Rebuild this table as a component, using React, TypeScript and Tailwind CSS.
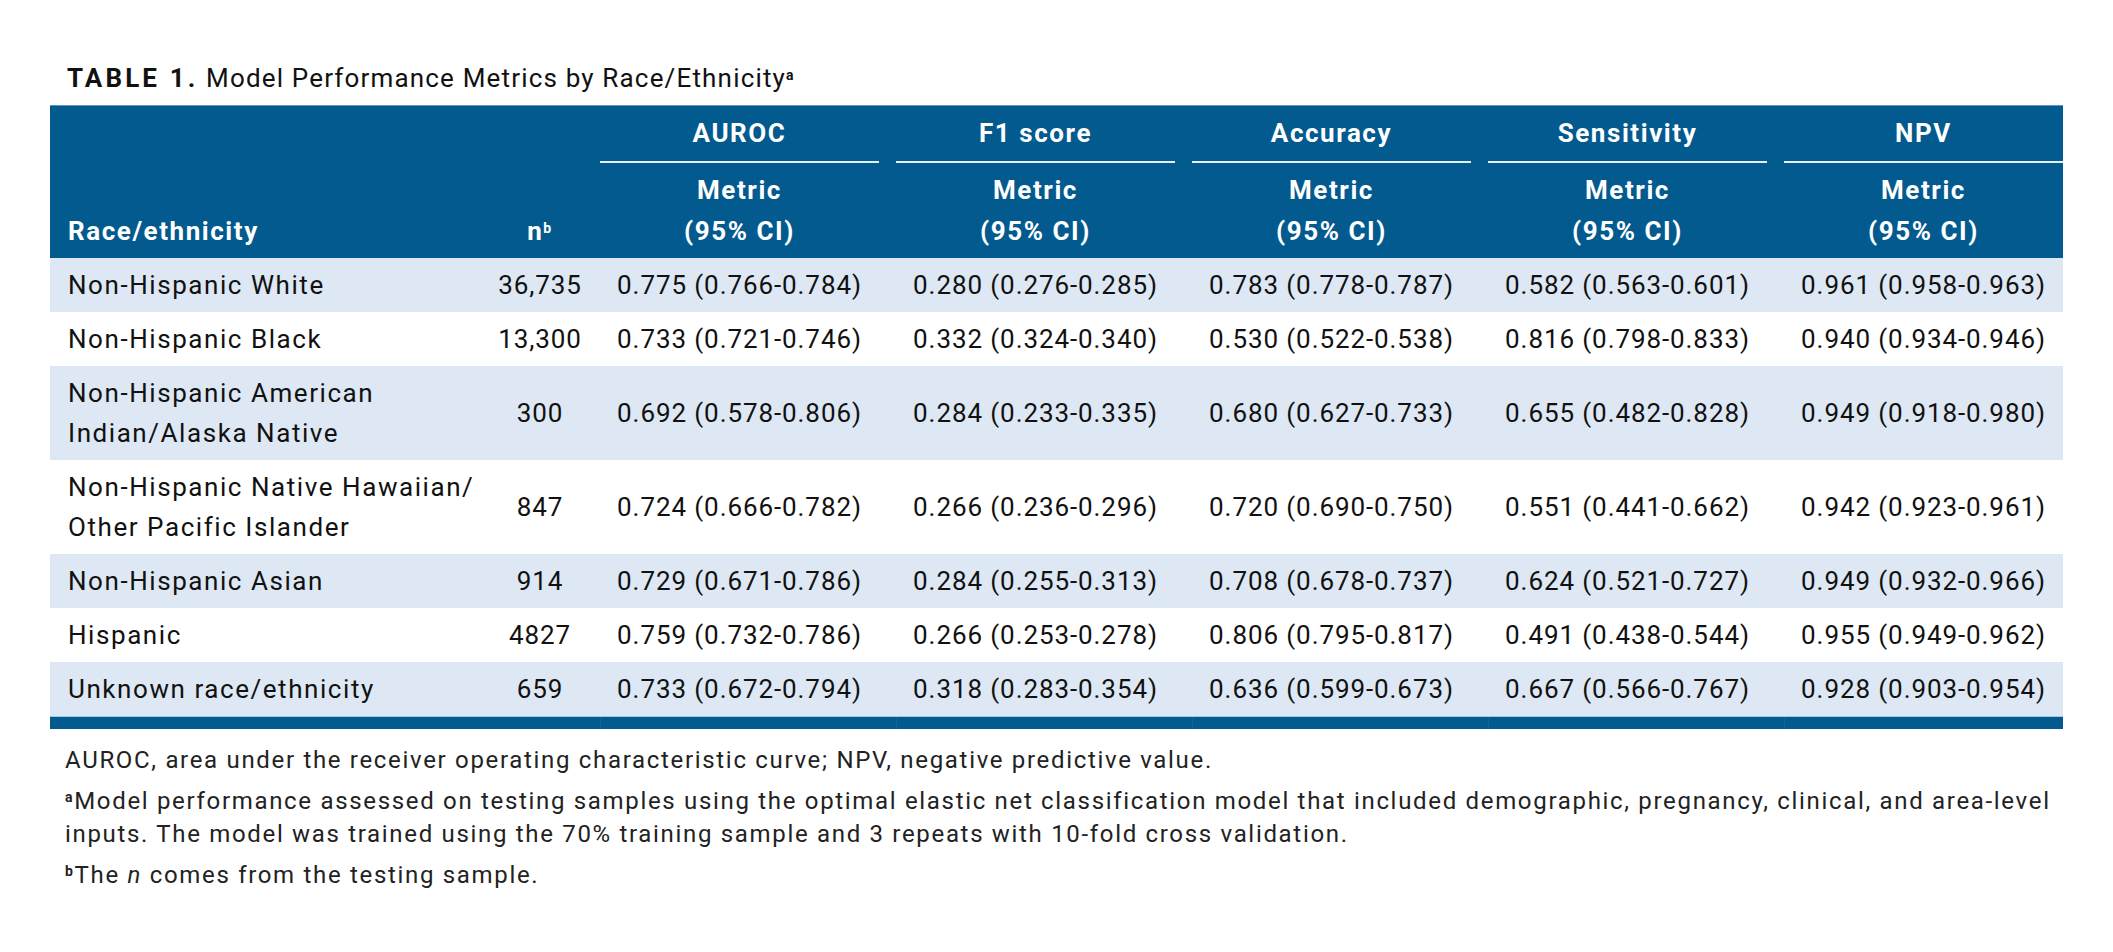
const metrics = ["AUROC", "F1 score", "Accuracy", "Sensitivity", "NPV"];

const rows: { name: string[]; n: string; values: string[] }[] = [
  {
    name: ["Non-Hispanic White"],
    n: "36,735",
    values: ["0.775 (0.766-0.784)", "0.280 (0.276-0.285)", "0.783 (0.778-0.787)", "0.582 (0.563-0.601)", "0.961 (0.958-0.963)"],
  },
  {
    name: ["Non-Hispanic Black"],
    n: "13,300",
    values: ["0.733 (0.721-0.746)", "0.332 (0.324-0.340)", "0.530 (0.522-0.538)", "0.816 (0.798-0.833)", "0.940 (0.934-0.946)"],
  },
  {
    name: ["Non-Hispanic American", "Indian/Alaska Native"],
    n: "300",
    values: ["0.692 (0.578-0.806)", "0.284 (0.233-0.335)", "0.680 (0.627-0.733)", "0.655 (0.482-0.828)", "0.949 (0.918-0.980)"],
  },
  {
    name: ["Non-Hispanic Native Hawaiian/", "Other Pacific Islander"],
    n: "847",
    values: ["0.724 (0.666-0.782)", "0.266 (0.236-0.296)", "0.720 (0.690-0.750)", "0.551 (0.441-0.662)", "0.942 (0.923-0.961)"],
  },
  {
    name: ["Non-Hispanic Asian"],
    n: "914",
    values: ["0.729 (0.671-0.786)", "0.284 (0.255-0.313)", "0.708 (0.678-0.737)", "0.624 (0.521-0.727)", "0.949 (0.932-0.966)"],
  },
  {
    name: ["Hispanic"],
    n: "4827",
    values: ["0.759 (0.732-0.786)", "0.266 (0.253-0.278)", "0.806 (0.795-0.817)", "0.491 (0.438-0.544)", "0.955 (0.949-0.962)"],
  },
  {
    name: ["Unknown race/ethnicity"],
    n: "659",
    values: ["0.733 (0.672-0.794)", "0.318 (0.283-0.354)", "0.636 (0.599-0.673)", "0.667 (0.566-0.767)", "0.928 (0.903-0.954)"],
  },
];

const cols = "grid grid-cols-[430px_120px_296px_296px_296px_296px_279px]";

export default function App() {
  return (
    <div className="min-h-[952px] w-[2113px] bg-white font-['Roboto','Liberation_Sans',sans-serif] text-[#111]">
      <div className="ml-[50px] w-[2013px] pt-[62px]">
        {/* title */}
        <div className="pl-[17px] text-[26px] leading-[32px] tracking-[0.045em]">
          <span className="font-bold tracking-[0.12em]">TABLE 1.</span> Model Performance Metrics by Race/Ethnicity
          <sup className="text-[14px] font-bold">a</sup>
        </div>

        {/* header */}
        <div className={`${cols} mt-[11px] border-t border-[#5f92b8] bg-[#035a8e] font-bold text-white text-[26px] tracking-[0.06em]`}>
          <div className="self-end pb-[6px] pl-[18px] leading-[41px]">Race/ethnicity</div>
          <div className="self-end pb-[6px] text-center leading-[41px]">
            n<sup className="text-[14px]">b</sup>
          </div>
          {metrics.map((m, i) => (
            <div key={m} className={i < 4 ? "pr-[17px]" : ""}>
              <div className="flex h-[55px] items-center justify-center">{m}</div>
              <div className="h-[2px] bg-[#e6eef6]" />
              <div className="pt-[7px] pb-[6px] text-center leading-[41px]">
                <div>Metric</div>
                <div>(95% CI)</div>
              </div>
            </div>
          ))}
        </div>

        {/* body */}
        {rows.map((r, ri) => (
          <div
            key={r.name.join()}
            className={`${cols} items-center py-[7px] text-[26px] leading-[40px] tracking-[0.035em] ${ri % 2 === 0 ? "bg-[#dde8f4]" : "bg-white"}`}
          >
            <div className="pl-[18px] tracking-[0.06em]">
              {r.name.map((l) => (
                <div key={l}>{l}</div>
              ))}
            </div>
            <div className="text-center">{r.n}</div>
            {r.values.map((v, i) => (
              <div key={i} className={i < 4 ? "pr-[17px]" : ""}>
                <div className="text-center">{v}</div>
              </div>
            ))}
          </div>
        ))}
        <div className={`${cols} h-[13px] border-t border-[#9ccbe8] bg-[#035a8e]`}>
          <div />
          <div />
          <div className="border-l border-[#0a6299]" />
          <div className="border-l border-[#0a6299]" />
          <div className="border-l border-[#0a6299]" />
          <div className="border-l border-[#0a6299]" />
          <div className="border-l border-[#0a6299]" />
        </div>

        {/* footnotes */}
        <div className="flex flex-col gap-[8px] pt-[15px] pl-[15px] text-[24px] leading-[33px] text-[#222] tracking-[0.07em]">
          <p>AUROC, area under the receiver operating characteristic curve; NPV, negative predictive value.</p>
          <p>
            <sup className="text-[14px] font-bold">a</sup>Model performance assessed on testing samples using the optimal elastic net classification model that included demographic, pregnancy, clinical, and area-level
            <br />
            inputs. The model was trained using the 70% training sample and 3 repeats with 10-fold cross validation.
          </p>
          <p>
            <sup className="text-[14px] font-bold">b</sup>The <i>n</i> comes from the testing sample.
          </p>
        </div>
      </div>
    </div>
  );
}
